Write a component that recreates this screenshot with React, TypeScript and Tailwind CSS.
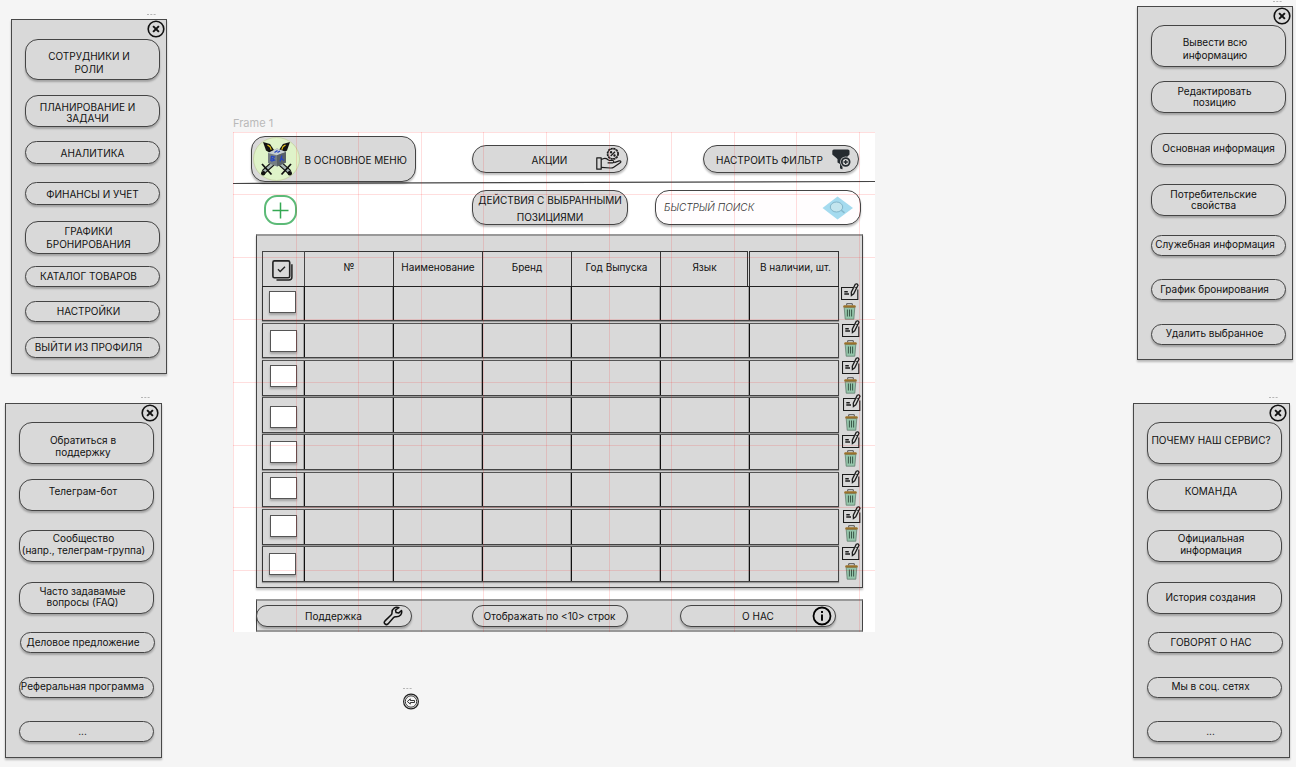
import type { ReactNode } from "react";

type Entry = { box: string; text: string; lines: string[] };

const shadow = "shadow-[0_2px_2px_rgba(0,0,0,0.25)]";

function Dots({ className }: { className: string }) {
  return (
    <svg className={`absolute ${className}`} width="9" height="3" viewBox="0 0 9 3" fill="#b5b5b5">
      <rect x="0" y="1" width="2" height="1" />
      <rect x="3.3" y="1" width="2" height="1" />
      <rect x="6.6" y="1" width="2" height="1" />
    </svg>
  );
}

function CloseIcon({ className }: { className: string }) {
  return (
    <svg className={`absolute top-0 ${className}`} width="18" height="18" viewBox="0 0 18 18" fill="none" stroke="#111">
      <circle cx="9" cy="9" r="7.8" strokeWidth="1.6" />
      <path d="M6.100 6.100l5.800 5.800M11.900 6.100l-5.800 5.800" strokeWidth="2" />
    </svg>
  );
}

function Panel({ place, close, items }: { place: string; close: string; items: Entry[] }) {
  return (
    <section className={`absolute flex flex-col border border-[#484848] bg-[#d9d9d9] pl-[13px] ${shadow} ${place}`}>
      <CloseIcon className={close} />
      {items.map((it) => (
        <button
          key={it.lines.join()}
          className={`block w-[135px] shrink-0 rounded-[13px] border border-[#444] bg-[#d9d9d9] text-center whitespace-nowrap ${shadow} ${it.box}`}
        >
          <div className={`flex h-full flex-col items-center justify-start ${it.text}`}>
            {it.lines.map((l) => (
              <span key={l}>{l}</span>
            ))}
          </div>
        </button>
      ))}
    </section>
  );
}

const staffMenu: Entry[] = [
  { box: "mt-[19px] h-[41px]", text: "pt-[10px] pr-[7px] leading-[12.5px]", lines: ["СОТРУДНИКИ И", "РОЛИ"] },
  { box: "mt-[15px] h-[32px]", text: "pt-[5.5px] pr-[10px] leading-[11px]", lines: ["ПЛАНИРОВАНИЕ И", "ЗАДАЧИ"] },
  { box: "mt-[14px] h-[23px]", text: "pt-[5px] leading-[13px]", lines: ["АНАЛИТИКА"] },
  { box: "mt-[18px] h-[23px]", text: "pt-[4.5px] leading-[13px]", lines: ["ФИНАНСЫ И УЧЕТ"] },
  { box: "mt-[16px] h-[33px]", text: "pt-[3px] pr-[8px] leading-[13px]", lines: ["ГРАФИКИ", "БРОНИРОВАНИЯ"] },
  { box: "mt-[12px] h-[21px]", text: "pt-[3px] pr-[8px] leading-[13px]", lines: ["КАТАЛОГ ТОВАРОВ"] },
  { box: "mt-[14px] h-[21px]", text: "pt-[3px] pr-[8px] leading-[13px]", lines: ["НАСТРОЙКИ"] },
  { box: "mt-[15px] h-[21px]", text: "pt-[3px] pr-[8px] leading-[13px]", lines: ["ВЫЙТИ ИЗ ПРОФИЛЯ"] },
];

const supportMenu: Entry[] = [
  { box: "mt-[18px] h-[42px]", text: "pt-[10.5px] pr-[7px] leading-[12.5px]", lines: ["Обратиться в", "поддержку"] },
  { box: "mt-[15px] h-[32px]", text: "pt-[5px] pr-[7px] leading-[13px]", lines: ["Телеграм-бот"] },
  { box: "mt-[19px] h-[32px]", text: "pt-[0.5px] pr-[6px] leading-[12.5px]", lines: ["Сообщество", "(напр., телеграм-группа)"] },
  { box: "mt-[20px] h-[32px]", text: "pt-[2.5px] pr-[8px] leading-[11px]", lines: ["Часто задавамые", "вопросы (FAQ)"] },
  { box: "ml-px mt-[18px] h-[21px]", text: "pt-[3px] pr-[9px] leading-[13px]", lines: ["Деловое предложение"] },
  { box: "mt-[24px] h-[21px]", text: "pt-[2px] pr-[8px] leading-[13px]", lines: ["Реферальная программа"] },
  { box: "mt-[23px] h-[21px]", text: "pt-[3px] pr-[8px] leading-[13px]", lines: ["..."] },
];

const infoMenu: Entry[] = [
  { box: "mt-[18px] h-[42px]", text: "pt-[10px] pr-[7px] leading-[12.5px]", lines: ["Вывести всю", "информацию"] },
  { box: "mt-[14px] h-[32px]", text: "pt-[4px] pr-[8px] leading-[11px]", lines: ["Редактировать", "позицию"] },
  { box: "mt-[20px] h-[32px]", text: "pt-[8px] leading-[13px]", lines: ["Основная информация"] },
  { box: "mt-[19px] h-[32px]", text: "pt-[4px] pr-[10px] leading-[11px]", lines: ["Потребительские", "свойства"] },
  { box: "mt-[19px] h-[21px]", text: "pt-[2px] pr-[7px] leading-[13px]", lines: ["Служебная информация"] },
  { box: "mt-[23px] h-[21px]", text: "pt-[3px] pr-[8px] leading-[13px]", lines: ["График бронирования"] },
  { box: "mt-[24px] h-[21px]", text: "pt-[2px] pr-[8px] leading-[13px]", lines: ["Удалить выбранное"] },
];

const aboutMenu: Entry[] = [
  { box: "mt-[18px] h-[42px]", text: "pt-[10.5px] pr-[7px] leading-[13px]", lines: ["ПОЧЕМУ НАШ СЕРВИС?"] },
  { box: "mt-[15px] h-[32px]", text: "pt-[5px] pr-[7px] leading-[13px]", lines: ["КОМАНДА"] },
  { box: "mt-[19px] h-[32px]", text: "pt-[0.5px] pr-[7px] leading-[12.5px]", lines: ["Официальная", "информация"] },
  { box: "mt-[20px] h-[32px]", text: "pt-[8px] pr-[8px] leading-[13px]", lines: ["История создания"] },
  { box: "ml-px mt-[18px] h-[21px]", text: "pt-[3px] pr-[9px] leading-[13px]", lines: ["ГОВОРЯТ О НАС"] },
  { box: "mt-[24px] h-[21px]", text: "pt-[2px] pr-[8px] leading-[13px]", lines: ["Мы в соц. сетях"] },
  { box: "mt-[23px] h-[21px]", text: "pt-[3px] pr-[8px] leading-[13px]", lines: ["..."] },
];

function Logo() {
  const sword = (
    <g>
      <path d="M10 5l7 2 4 6-1.500 4.500-6.500-4z" fill="#111" />
      <path d="M14.500 8l2.500 1.700 1.300 3" stroke="#e6c619" strokeWidth="1.100" fill="none" />
      <path d="M26.500 26l10 9" stroke="#111" strokeWidth="5" />
      <path d="M26.500 26l9.500 8.500" stroke="#a9b7b5" strokeWidth="2.600" />
      <path d="M28.500 37.500l9.500-10.500" stroke="#111" strokeWidth="1.800" />
      <circle cx="36.800" cy="36.300" r="2.200" fill="#111" />
    </g>
  );
  return (
    <svg width="47" height="44" viewBox="0 0 47 44">
      <ellipse cx="23.500" cy="22" rx="23" ry="21.500" fill="#dff3c9" stroke="#c3cf9e" strokeWidth="0.800" />
      {sword}
      <g transform="translate(47 0) scale(-1 1)">{sword}</g>
      <path d="M15 16l9-4.500 9 3.500v10.500l-9 4-9-3.500z" fill="#747d83" />
      <path d="M15 16l9-4.500 9 3.500-9 3.300z" fill="#c5ced0" />
      <path d="M24 18.300l9-3.300v10.500l-9 4z" fill="#596167" />
      <path d="M21.500 15.500l3-2m0 2l2.500-1.500M18.500 19l-.7 5M18.500 19l3 1-2 1.800 2 1.200-3.300 1.200M29 18.500l-2 6m1.500-3l2.300 2" stroke="#2343c6" strokeWidth="1.200" fill="none" />
    </svg>
  );
}

function HandPercent() {
  return (
    <svg width="26" height="24" viewBox="0 0 26 24" fill="none" stroke="#1a1a1a" strokeWidth="1.200" strokeLinejoin="round">
      <rect x="0.8" y="10.800" width="4.400" height="11.400" />
      <path d="M5.200 12.500l2-.8c1.800-.7 3.400-.2 4.800 1l1.400.8h3.200c1.600 0 1.600 2.400 0 2.400h-5M18.300 15.600l4.800-1.700c1.700-.5 2.400 1 1.100 1.900l-6.500 4.400c-1 .7-2 .9-3.200.8l-9.300-.7" />
      <circle cx="16.800" cy="6.800" r="5.500" strokeWidth="1.300" strokeDasharray="2 0.880" />
      <circle cx="16.800" cy="6.800" r="4.900" strokeWidth="0.900" />
      <path d="M19 4.800l-4.300 4.200" />
      <circle cx="15.100" cy="5.200" r="0.600" />
      <circle cx="18.500" cy="8.500" r="0.600" />
    </svg>
  );
}

function FilterPlus() {
  return (
    <svg width="19" height="21" viewBox="0 0 19 21">
      <path d="M.3 2.100Q.3.500 1.900.500h14q1.600 0 1.600 1.600v3.400L13 10H5.500L.3 5.500z" fill="#252b30" />
      <path d="M5.500 9h5v11.200q-1.500 0-2.500-1V15l-2.500-1.500z" fill="#252b30" />
      <circle cx="13.700" cy="13" r="5.500" fill="#d9d9d9" />
      <circle cx="13.700" cy="13" r="3.900" fill="none" stroke="#252b30" strokeWidth="1.800" />
      <path d="M13.700 10.900v4.200M11.600 13h4.200" stroke="#252b30" strokeWidth="1.300" />
    </svg>
  );
}

function SearchDiamond() {
  return (
    <svg width="32" height="24" viewBox="0 0 32 24">
      <path d="M15.500.5L31 12 15.500 23.500.5 12z" fill="#a5dbef" />
      <path d="M19 14l3.500 2.800" stroke="#86b9cd" strokeWidth="1.600" />
      <ellipse cx="14.500" cy="11" rx="6.200" ry="5" fill="#c3e5ee" stroke="#83b6ca" />
    </svg>
  );
}

function SelectAll() {
  return (
    <svg width="21" height="21" viewBox="0 0 21 21" fill="none" stroke="#222">
      <rect x="0.900" y="0.900" width="16.800" height="16.800" rx="1.500" strokeWidth="1.600" />
      <path d="M19.900 4.200v12.700q0 3-3 3H4.500" strokeWidth="1.500" />
      <path d="M6 9.200l2.200 2.400L13 6.700" strokeWidth="1.400" />
    </svg>
  );
}

function EditIcon() {
  return (
    <svg width="18" height="17" viewBox="0 0 18 17" fill="none" stroke="#1c1c1c">
      <path d="M12 4.500H.5v12h16.300V6.500" strokeWidth="1.100" />
      <path d="M3.300 8.800h3.500M3.300 11h4.700" strokeWidth="1.400" />
      <path d="M14.300 1.200q1.900-1.200 2.700 1.100l-4.300 8.500-2.300 1.700-.1-3.300zM13.300 3.300l2.600 1.300" strokeWidth="1.300" />
    </svg>
  );
}

function TrashIcon() {
  return (
    <svg width="13" height="17" viewBox="0 0 13 17">
      <path d="M3.700 2.500V.7h5.600v1.800" fill="#ddd" stroke="#444" strokeWidth="0.900" />
      <path d="M1.200 4.500h10.600l-1 11.700H2.200z" fill="#94c5aa" stroke="#5a7565" strokeWidth="0.700" />
      <path d="M4.400 6.500v7M6.500 6.500v7M8.600 6.500v7" stroke="#3b5849" strokeWidth="1" />
      <path d="M.3 4.500V3.300q0-1 1-1h10.400q1 0 1 1v1.200z" fill="#99702a" />
    </svg>
  );
}

function Wrench() {
  return (
    <svg width="20" height="20" viewBox="0 0 20 20" fill="none" stroke="#111" strokeWidth="1.500" strokeLinejoin="round">
      <path d="M15.900 1.700C12.700.2 8.800 2.700 9 6.700q0 1.300-.7 2L2 14.900c-2 2.100.9 4.900 3 3l5.600-6.300q.8-.9 2.200-.8c4.200.2 6.700-2.900 5.700-6.300l-2.900 2.600-2.500-.5-.6-2.600z" />
    </svg>
  );
}

function InfoIcon() {
  return (
    <svg width="20" height="20" viewBox="0 0 20 20" fill="none" stroke="#000">
      <circle cx="10" cy="10" r="8.500" strokeWidth="1.800" />
      <path d="M10 8.500v6.200M10 5v2" strokeWidth="1.900" />
    </svg>
  );
}

function Pill({ className, children }: { className: string; children: ReactNode }) {
  return (
    <button className={`flex shrink-0 border border-[#444] bg-[#d9d9d9] whitespace-nowrap ${shadow} ${className}`}>{children}</button>
  );
}

const headers = [
  { label: "№", cell: "w-[89px] border-l-0" },
  { label: "Наименование", cell: "w-[89px] border-l-0" },
  { label: "Бренд", cell: "w-[89px] border-l-0 border-[#111]" },
  { label: "Год Выпуска", cell: "w-[89px] border-l-0 pl-px" },
  { label: "Язык", cell: "w-[87px] border-l-0 pl-px" },
  { label: "В наличии, шт.", cell: "ml-px w-[90px] pl-[3px]" },
];

const rows = [
  { row: "border-t-0 h-[34px]", check: "mt-[4px] ml-[6px]" },
  { row: "mt-[2px] h-[35px]", check: "mt-[6px] ml-[7px]" },
  { row: "mt-[2px] h-[36px]", check: "mt-[4px] ml-[7px]" },
  { row: "mt-px h-[36px]", check: "mt-[8px] ml-[7px]" },
  { row: "mt-px h-[36px]", check: "mt-[6px] ml-[7px]" },
  { row: "mt-[2px] h-[35px]", check: "mt-[4px] ml-[7px]" },
  { row: "mt-[2px] h-[36px]", check: "mt-[5px] ml-[7px]" },
  { row: "mt-px h-[36px]", check: "mt-[6px] ml-[6px]" },
];

const actions = [
  { edit: "ml-[2px]", trash: "mt-[3px] ml-[4px]" },
  { edit: "ml-[3px]", trash: "mt-[3px] ml-[5px]" },
  { edit: "ml-[3px]", trash: "mt-[3px] ml-[5px]" },
  { edit: "ml-[4px]", trash: "mt-[3px] ml-[6px]" },
  { edit: "ml-[3px]", trash: "mt-[2px] ml-[5px]" },
  { edit: "mt-[3px] ml-[3px]", trash: "mt-[2px] ml-[5px]" },
  { edit: "ml-[4px]", trash: "mt-[2px] ml-[6px]" },
  { edit: "mt-px ml-[3px]", trash: "mt-[3px] ml-[6px]" },
];

function Catalog() {
  return (
    <div className={`ml-[23px] mt-[9px] flex h-[354px] w-[607px] shrink-0 border border-t-2 border-[#444] border-t-[#999] bg-[#d9d9d9] ${shadow}`}>
      <div className="ml-[5px] mt-[15px] w-[577px]">
        <div className="flex h-[36px] border-b border-[#222]">
          <div className="flex w-[43px] border border-b-0 border-[#444] pl-[9px] pt-[8px]">
            <SelectAll />
          </div>
          {headers.map((h) => (
            <div key={h.label} className={`flex justify-center border border-b-0 border-[#333] pt-[9px] leading-[13px] whitespace-nowrap ${h.cell}`}>
              {h.label}
            </div>
          ))}
        </div>
        {rows.map((r, i) => (
          <div key={i} className={`flex border border-t-[#555] border-r-[#444] border-b-[#444] border-l-[#333] shadow-[0_1px_1px_rgba(0,0,0,0.3)] ${r.row}`}>
            <div className="w-[41px] shrink-0">
              <div className={`h-[22px] w-[27px] border border-[#555] bg-white ${shadow} ${r.check}`} />
            </div>
            {headers.map((h) => (
              <div key={h.label} className="w-[89px] shrink-0 border-l border-[#111] shadow-[-1px_0_0_rgba(0,0,0,0.25)]" />
            ))}
          </div>
        ))}
      </div>
      <div className="flex flex-col items-start pt-[47px]">
        {actions.map((a, i) => (
          <div key={i}>
            <div className={a.edit}><EditIcon /></div>
            <div className={a.trash}><TrashIcon /></div>
          </div>
        ))}
      </div>
    </div>
  );
}

const vLines = Array.from({ length: 11 }, (_, i) => i);
const hLines = Array.from({ length: 8 }, (_, i) => i);

export default function App() {
  return (
    <main className="relative h-[767px] w-[1296px] overflow-hidden bg-[#f5f5f5] font-['Inter',sans-serif] text-[10px] text-[#111] [&_svg]:block [&_svg]:shrink-0">
      <Dots className="left-[147px] top-[13px]" />
      <Panel place="left-[11px] top-[19px] h-[355px] w-[156px]" close="right-[1.5px]" items={staffMenu} />
      <Dots className="left-[141px] top-[396px]" />
      <Panel place="left-[5px] top-[403px] h-[355px] w-[157px]" close="right-[2px]" items={supportMenu} />
      <Dots className="left-[1273px] top-0" />
      <Panel place="left-[1137px] top-[6px] h-[354px] w-[156px]" close="right-px" items={infoMenu} />
      <Dots className="left-[1269px] top-[396px]" />
      <Panel place="left-[1133px] top-[403px] h-[355px] w-[157px]" close="right-[2px]" items={aboutMenu} />

      <div className="absolute left-[233px] top-[116px] text-[11px] leading-[14px] text-[#b9b9b9]">Frame 1</div>

      <section className="absolute left-[233px] top-[132px] flex h-[500px] w-[642px] flex-col overflow-hidden bg-white">
        <svg className="absolute left-0 top-[48px]" width="642" height="5" viewBox="0 0 642 5">
          <path d="M0 3.500L642 1.500" stroke="#444" strokeWidth="1.200" />
        </svg>
        <div className="relative flex h-[51px] shrink-0 items-start">
          <Pill className="ml-[18px] mt-[4px] h-[46px] w-[165px] items-center rounded-[14px]">
            <span className="ml-px"><Logo /></span>
            <span className="ml-[4.5px] pt-[2px]">В ОСНОВНОЕ МЕНЮ</span>
          </Pill>
          <Pill className="ml-[56px] mt-[13px] h-[28px] w-[156px] items-center rounded-[14px]">
            <span className="ml-[58.5px] w-[38px] pt-[2px] text-left">АКЦИИ</span>
            <span className="ml-[26px]"><HandPercent /></span>
          </Pill>
          <Pill className="ml-[75px] mt-[13px] h-[28px] w-[156px] items-center rounded-[14px]">
            <span className="ml-[12px] w-[108px] pt-[2px] text-left">НАСТРОИТЬ ФИЛЬТР</span>
            <span className="ml-[8px]"><FilterPlus /></span>
          </Pill>
        </div>
        <div className="relative mt-[7px] flex h-[35px] shrink-0 items-start">
          <button className="ml-[31px] mt-[5px] flex h-[30px] w-[33px] items-center justify-center rounded-[13px] border-2 border-[#5cba77] bg-white">
            <svg width="17" height="17" viewBox="0 0 17 17" stroke="#34a853" strokeWidth="1.500">
              <path d="M8.500.5v16M.5 8.500h16" />
            </svg>
          </button>
          <Pill className="ml-[175px] h-[35px] w-[156px] flex-col items-center rounded-[14px] pt-px leading-[17px]">
            <span>ДЕЙСТВИЯ С ВЫБРАННЫМИ</span>
            <span>ПОЗИЦИЯМИ</span>
          </Pill>
          <div className={`ml-[27px] flex h-[35px] w-[206px] items-center justify-between rounded-[14px] border border-[#444] bg-[#fffdfe] pl-[8px] pr-[6px] ${shadow}`}>
            <span className="font-light text-[#333] italic">БЫСТРЫЙ ПОИСК</span>
            <SearchDiamond />
          </div>
        </div>
        <Catalog />
        <div className="ml-[23px] mt-[11px] flex h-[33px] w-[607px] shrink-0 border border-t-2 border-b-2 border-[#444] border-y-[#999] bg-[#d9d9d9] pt-[4px]">
          <Pill className="-ml-px h-[22px] w-[156px] items-center rounded-full">
            <span className="ml-[48px] w-[60px] text-left">Поддержка</span>
            <span className="ml-[18px]"><Wrench /></span>
          </Pill>
          <Pill className="ml-[60px] h-[22px] w-[156px] items-center justify-center rounded-full pr-px">Отображать по &lt;10&gt; строк</Pill>
          <Pill className="ml-[52px] h-[22px] w-[156px] items-center rounded-full">
            <span className="ml-[61px] w-[36px] text-left">О НАС</span>
            <span className="ml-[34px]"><InfoIcon /></span>
          </Pill>
        </div>
        <div className="pointer-events-none absolute inset-0 flex overflow-hidden">
          {vLines.map((i) => (
            <div key={i} className="w-[62.6px] shrink-0 border-l border-[rgba(255,0,0,0.13)]" />
          ))}
        </div>
        <div className="pointer-events-none absolute inset-x-0 -top-[0.4px] bottom-0 flex flex-col overflow-hidden">
          {hLines.map((i) => (
            <div key={i} className="h-[62.6px] shrink-0 border-t border-[rgba(255,0,0,0.13)]" />
          ))}
        </div>
      </section>

      <Dots className="left-[403px] top-[687px]" />
      <svg className="absolute left-[402px] top-[693px]" width="18" height="18" viewBox="0 0 18 18" fill="none" stroke="#222">
        <circle cx="9" cy="8.500" r="7.400" strokeWidth="1.200" />
        <circle cx="9" cy="8.500" r="5.700" strokeWidth="0.900" />
        <path d="M5.300 8.500l3-2.600v1.600h4.200v2H8.300v1.600z" strokeWidth="0.900" />
      </svg>
    </main>
  );
}
